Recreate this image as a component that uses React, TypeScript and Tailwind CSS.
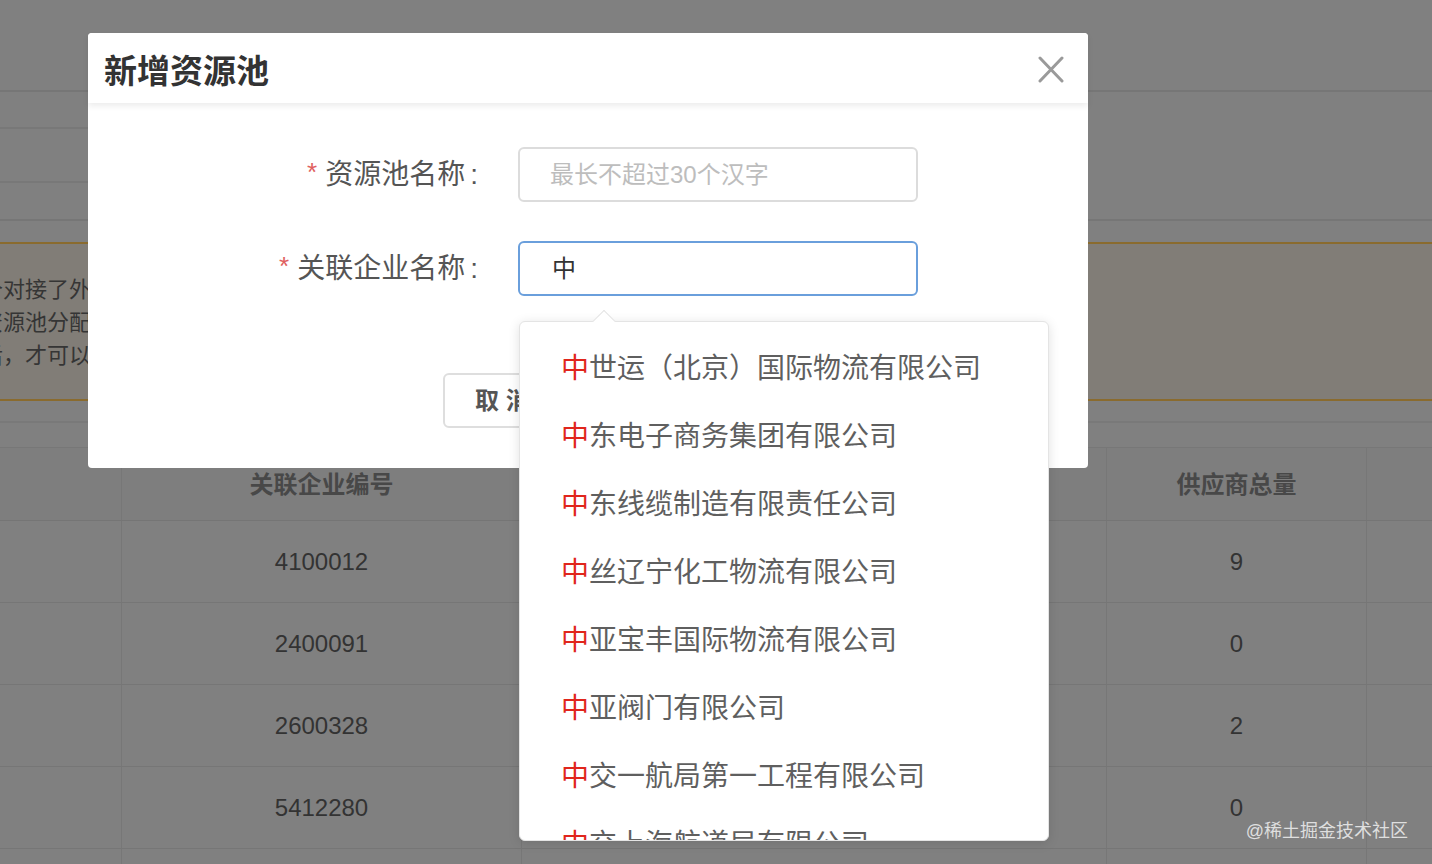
import React from "react";

const items = [
  "世运（北京）国际物流有限公司",
  "东电子商务集团有限公司",
  "东线缆制造有限责任公司",
  "丝辽宁化工物流有限公司",
  "亚宝丰国际物流有限公司",
  "亚阀门有限公司",
  "交一航局第一工程有限公司",
  "交上海航道局有限公司",
];

const rows = [
  ["4100012", "9"],
  ["2400091", "0"],
  ["2600328", "2"],
  ["5412280", "0"],
  ["", ""],
];

export default function App() {
  return (
    <div className="relative w-[1432px] h-[864px] overflow-hidden bg-[#808080] font-['Liberation_Sans','Noto_Sans_CJK_SC',sans-serif]">
      {/* dimmed page */}
      <div className="h-[92px] border-b-2 border-[#767676]" />
      <div className="flex h-[129px] border-b-2 border-[#767676]">
        <div className="w-[400px] flex flex-col">
          <div className="h-[37px] border-b-2 border-[#787878]" />
          <div className="h-[54px] border-b-2 border-[#787878]" />
        </div>
      </div>
      <div className="mt-[21px] h-[159px] border-y-2 border-[#8a6b2e] bg-[#817d77] pt-[29px] text-[22px] leading-[33px] text-[#353535] -ml-[19px] whitespace-nowrap">
        <div>个对接了外部系统的供应商</div>
        <div>资源池分配给关联企业</div>
        <div>后，才可以进行管理</div>
      </div>
      <div className="h-[22px] border-b-2 border-[#797979]" />
      <div className="mt-[24px] border-t border-[#777]">
        <div className="flex h-[73px] bg-[#7e7e7e] border-b border-[#757575] text-[24px] font-bold text-[#484848]">
          <div className="w-[122px] border-r border-[#777]" />
          <div className="w-[400px] border-r border-[#777] flex items-center justify-center pt-[2px]">关联企业编号</div>
          <div className="w-[585px] border-r border-[#777]" />
          <div className="w-[260px] border-r border-[#777] flex items-center justify-center pt-[2px]">供应商总量</div>
          <div className="flex-1" />
        </div>
        {rows.map((r, i) => (
          <div key={i} className="flex h-[82px] border-b border-[#767676] text-[24px] text-[#333]">
            <div className="w-[122px] border-r border-[#777]" />
            <div className="w-[400px] border-r border-[#777] flex items-center justify-center">{r[0]}</div>
            <div className="w-[585px] border-r border-[#777]" />
            <div className="w-[260px] border-r border-[#777] flex items-center justify-center">{r[1]}</div>
            <div className="flex-1" />
          </div>
        ))}
      </div>

      {/* watermark */}
      <div className="absolute right-[24px] bottom-[22px] text-[18px] leading-[22px] text-white/75">@稀土掘金技术社区</div>

      {/* modal */}
      <div className="absolute left-[88px] top-[33px] w-[1000px] rounded-[4px] bg-white">
        <div className="relative z-10 flex h-[70px] items-center justify-between rounded-t-[4px] bg-white pl-[16px] pr-[24px] shadow-[0_3px_6px_rgba(0,0,0,0.08)]">
          <div className="pt-[8px] text-[33px] font-bold text-[#333]">新增资源池</div>
          <svg width="26" height="27" viewBox="0 0 26 27" className="mt-[2px]">
            <path d="M2 2 L24 25 M24 2 L2 25" stroke="#9a9a9a" strokeWidth="3" strokeLinecap="round" />
          </svg>
        </div>
        <div className="pt-[44px] pb-[40px]">
          <div className="flex items-center h-[55px]">
            <div className="w-[390px] flex justify-end items-center text-[28px] text-[#555]">
              <span className="text-[#e06060] text-[26px] mr-[8px] mt-[-4px]">*</span>
              <span>资源池名称</span>
              <span className="ml-[5px]">:</span>
            </div>
            <div className="ml-[40px] w-[400px] h-[55px] rounded-[6px] border-2 border-[#dcdcdc] flex items-center pl-[30px] text-[24px] text-[#bdbdbd]">
              最长不超过30个汉字
            </div>
          </div>
          <div className="flex items-center h-[55px] mt-[39px]">
            <div className="w-[390px] flex justify-end items-center text-[28px] text-[#555]">
              <span className="text-[#e06060] text-[26px] mr-[8px] mt-[-4px]">*</span>
              <span>关联企业名称</span>
              <span className="ml-[5px]">:</span>
            </div>
            <div className="ml-[40px] w-[400px] h-[55px] rounded-[6px] border-2 border-[#6a9fdc] flex items-center pl-[32px] text-[24px] text-[#333]">
              中
            </div>
          </div>
          <div className="flex mt-[77px] pl-[355px] gap-[20px]">
            <div className="h-[55px] w-[140px] rounded-[6px] border-2 border-[#dedede] flex items-center pl-[30px] text-[24px] font-bold text-[#555]">
              取 消
            </div>
            <div className="h-[55px] w-[140px] rounded-[6px] bg-[#4a90e2] flex items-center justify-center text-[24px] font-bold text-white">
              确 定
            </div>
          </div>
        </div>
      </div>

      {/* autocomplete dropdown */}
      <div className="absolute left-[519px] top-[321px] w-[530px] h-[520px]">
        <div className="absolute left-[77px] -top-[8px] h-[16px] w-[16px] rotate-45 border-l border-t border-[#e4e4e4] bg-white z-10" />
        <div className="h-full w-full overflow-hidden rounded-[6px] border border-[#e4e4e4] bg-white shadow-[0_2px_12px_rgba(0,0,0,0.12)] pt-[13px]">
          {items.map((t) => (
            <div key={t} className="flex h-[68px] items-center pl-[41px] text-[28px] text-[#5f5f5f] whitespace-nowrap">
              <span className="text-[#e0261c]">中</span>
              <span>{t}</span>
            </div>
          ))}
        </div>
      </div>
    </div>
  );
}
